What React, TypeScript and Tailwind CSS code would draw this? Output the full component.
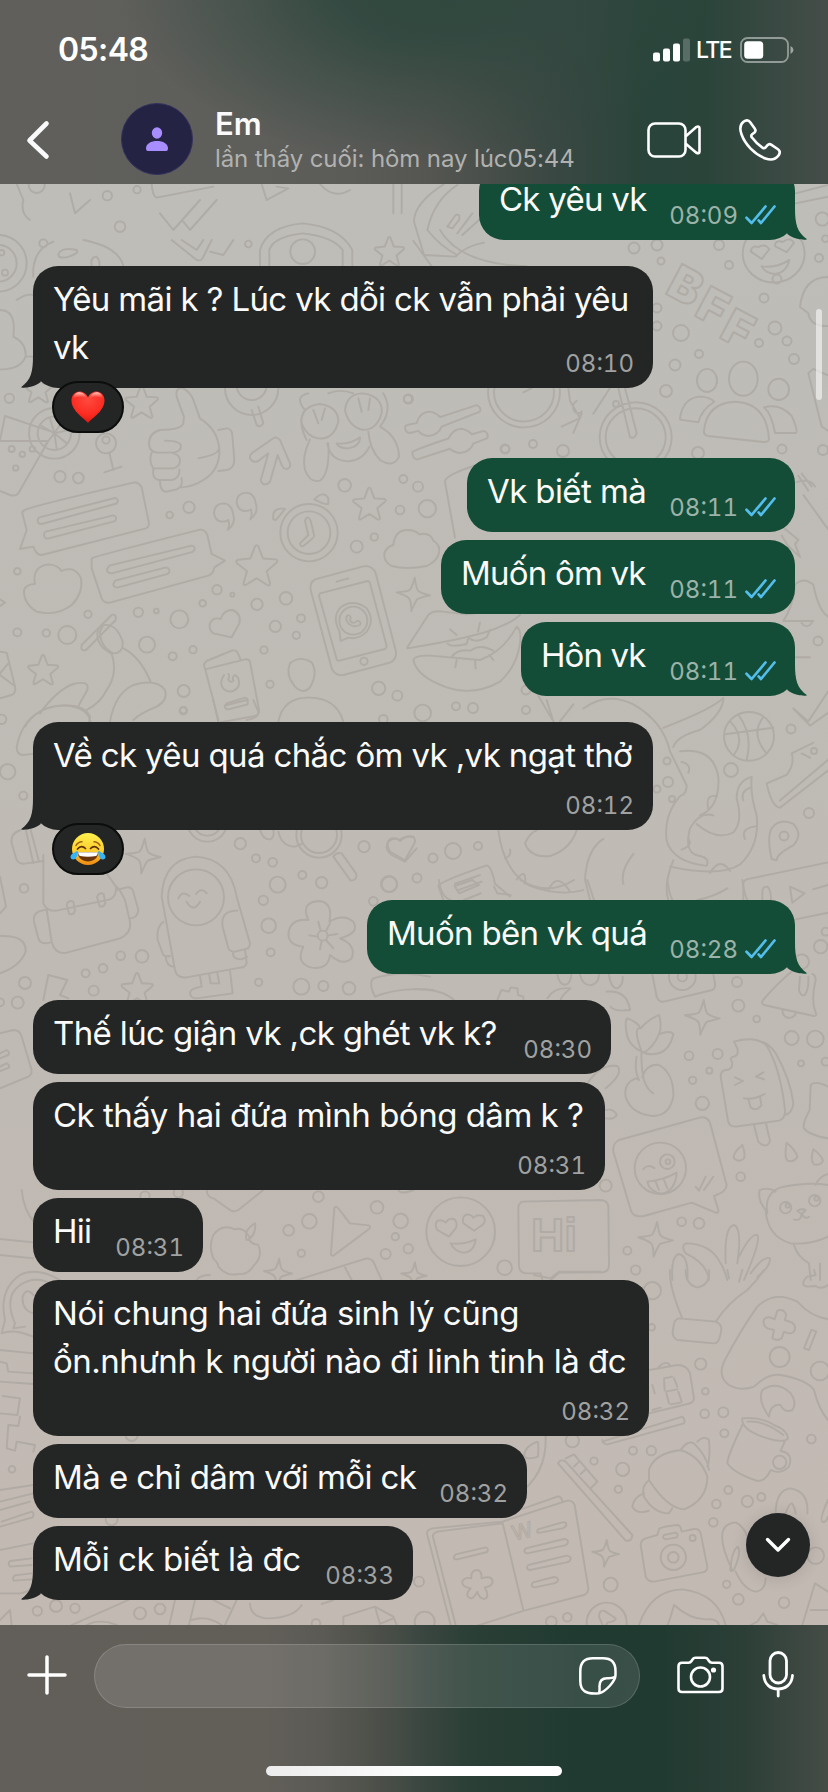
import React from 'react';

interface Message {
  id: number;
  lines: string[];
  time: string;
  outgoing?: boolean;
  tail?: boolean;
  reaction?: 'heart' | 'joy';
  box: string;
}

const MESSAGES: Message[] = [
  { id: 1, lines: ['Ck yêu vk'], time: '08:09', outgoing: true, tail: true, box: '-mt-[18px] h-[74px] w-[316px] tracking-[-0.75px]' },
  { id: 2, lines: ['Yêu mãi k ? Lúc vk dỗi ck vẫn phải yêu', 'vk'], time: '08:10', tail: true, reaction: 'heart', box: 'mt-[26px] h-[122px] w-[620px] tracking-[-0.64px]' },
  { id: 3, lines: ['Vk biết mà'], time: '08:11', outgoing: true, box: 'mt-[70px] h-[74px] w-[328px] tracking-[-0.6px]' },
  { id: 4, lines: ['Muốn ôm vk'], time: '08:11', outgoing: true, box: 'mt-2 h-[74px] w-[354px] tracking-[-0.8px]' },
  { id: 5, lines: ['Hôn vk'], time: '08:11', outgoing: true, tail: true, box: 'mt-2 h-[74px] w-[274px] tracking-[-0.9px]' },
  { id: 6, lines: ['Về ck yêu quá chắc ôm vk ,vk ngạt thở'], time: '08:12', tail: true, reaction: 'joy', box: 'mt-[26px] h-[108px] w-[620px] tracking-[-0.63px]' },
  { id: 7, lines: ['Muốn bên vk quá'], time: '08:28', outgoing: true, tail: true, box: 'mt-[70px] h-[74px] w-[428px] tracking-[-0.7px]' },
  { id: 8, lines: ['Thế lúc giận vk ,ck ghét vk k?'], time: '08:30', box: 'mt-[26px] h-[74px] w-[578px] tracking-[-0.63px]' },
  { id: 9, lines: ['Ck thấy hai đứa mình bóng dâm k ?'], time: '08:31', box: 'mt-2 h-[108px] w-[572px] tracking-[-0.5px]' },
  { id: 10, lines: ['Hii'], time: '08:31', box: 'mt-2 h-[74px] w-[170px] tracking-[-0.8px]' },
  { id: 11, lines: ['Nói chung hai đứa sinh lý cũng', 'ổn.nhưnh k người nào đi linh tinh là đc'], time: '08:32', box: 'mt-2 h-[156px] w-[616px] tracking-[-0.48px]' },
  { id: 12, lines: ['Mà e chỉ dâm với mỗi ck'], time: '08:32', box: 'mt-2 h-[74px] w-[494px] tracking-[-0.57px]' },
  { id: 13, lines: ['Mỗi ck biết là đc'], time: '08:33', tail: true, box: 'mt-2 h-[74px] w-[380px] tracking-[-0.46px]' },
];

type Triple = [number, number, number];

interface DoodleTile {
  x: number;
  y: number;
  sy?: number;
  paths: string[];
  dots: Triple[];
  stars?: Triple[];
  sparkles?: Triple[];
}

// Each tile is drawn at three times its size on the page
const TILES: DoodleTile[] = [
  {
    x: 0,
    y: 0,
    paths: [
      'M455 552Q458 590 470 593L640 560M785 552L800 600L865 565L830 560M50 552L70 600Q60 640 90 660M210 580L225 640L270 600M960 552Q1000 600 1050 570M1180 552V640M1205 552V640M480 640L520 690L600 600M550 665L570 690L650 600',
    ],
    dots: [[110, 555, 24], [322, 587, 14], [411, 569, 11], [360, 680, 16], [130, 730, 12]],
  },
  {
    x: 414,
    y: 0,
    paths: [
      'M90 552Q0 610 0 665L30 765L125 770Q150 740 210 728M130 555Q60 600 40 690Q80 740 130 765M100 680L125 645Q140 640 135 660L115 685ZM130 700L175 640M145 705L195 660',
      'M1145 580L1242 555M1145 610L1242 590',
    ],
    dots: [[1225, 657, 20], [1234, 716, 10]],
  },
  {
    x: 0,
    y: 240,
    paths: [
      'M100 110Q95 30 160 5M175 45Q180 20 230 30Q240 40 200 52Q175 55 175 45M275 78Q270 50 290 50Q300 60 298 78M250 0Q355 20 370 78',
      'M515 0L590 60Q605 65 610 50L635 0M545 0L590 30L610 0M630 35L670 45L700 0',
      'M780 78V30Q800 -40 908 -50Q1020 -40 1057 30V78M808 78V30Q820 -10 908 -20Q1000 -10 1028 30V78',
      'M0 210Q50 210 40 290Q80 310 77 350Q60 390 0 388M50 180Q80 160 100 165M80 350H100',
      'M755 510L770 555Q780 565 790 550L775 500',
    ],
    dots: [[-5, 70, 55], [-5, 70, 85], [5, 38, 8], [15, 98, 9], [908, 35, 37], [745, 12, 10], [28, 475, 14], [755, 445, 80], [755, 435, 45], [1225, 477, 14]],
    stars: [[1168, 35, 45], [115, 445, 45], [425, 487, 50]],
  },
  {
    x: 0,
    y: 430,
    paths: [
      'M0 33H145L55 190Q45 200 30 195L0 183M0 30L15 -42L145 2',
      'M163 10L120 -15M163 10L150 -35M163 10L190 -30M163 10L205 0M163 10L200 40M163 10L170 55M163 10L135 45M328 68L340 120M313 127L365 110',
      'M550 -20L552 -40Q540 -70 530 -100Q525 -130 550 -125Q570 -115 580 -90L600 -35Q655 0 658 60Q660 120 610 150Q580 170 545 172M550 -20Q545 0 480 0Q445 10 447 45Q450 65 470 68H520Q543 65 543 48Q540 32 495 32M455 68Q445 95 460 115H520Q540 110 540 92Q540 75 520 70M460 117Q455 145 475 150H515Q540 145 538 118M480 152Q480 185 500 185L530 178Q550 170 545 145M595 85Q650 75 655 60M655 0L680 -5Q695 -5 697 15L703 90Q703 115 680 120L655 123',
      'M820 25Q830 18 840 30L870 100Q873 115 860 117Q850 117 845 105L833 75L810 155Q800 168 787 160Q780 152 784 145L805 70L775 93Q758 100 750 85Q748 75 757 68Z',
      'M920 30Q890 -30 915 -60Q880 -100 925 -110M985 -110Q1020 -125 1060 -110M1150 -110Q1180 -60 1140 -10M905 -20Q900 -70 960 -78Q1015 -70 1015 -25Q1000 30 955 25Q920 20 905 -20M1035 -60Q1040 -110 1090 -110Q1150 -100 1145 -50Q1130 0 1090 0Q1045 -10 1035 -60M940 -60L955 -20M975 -65L965 -30M1075 -95L1085 -55M1110 -95L1105 -60M930 28Q905 80 915 120Q930 160 960 152Q990 130 985 40M1105 5Q1110 60 1140 90Q1180 115 1197 80Q1195 20 1140 -10M982 40Q990 92 1045 94Q1090 90 1108 50M1010 40Q1050 45 1080 22Q1080 50 1045 55Q1015 55 1010 40Z',
      'M75 240Q90 230 400 158Q415 155 425 172L447 280Q447 292 438 295L125 375Q110 377 100 350L60 357L80 300L67 250Q66 243 75 240ZM118 262L345 204Q355 205 353 216Q350 222 345 222L125 282Q112 282 113 270Q114 264 118 262ZM137 305L340 256Q350 258 348 268Q347 274 340 275L143 326Q132 325 132 315Q132 307 137 305Z',
      'M700 255Q695 220 670 220Q642 222 642 250Q645 272 665 275Q680 275 685 270Q690 285 683 300Q708 280 700 255ZM768 223Q763 188 738 188Q710 190 710 218Q713 240 733 243Q748 243 753 238Q758 253 751 268Q776 248 768 223Z',
      'M918 265Q925 258 932 272L943 318Q943 322 910 348Q900 350 900 340L925 315L915 272ZM943 208Q970 180 985 205V222Q975 225 943 208ZM820 268Q815 230 855 237L828 270Z',
      'M275 385Q280 380 600 299Q615 297 622 315L635 372L675 392L643 412Q640 432 625 437L330 518Q312 520 305 505L275 415ZM328 407L575 347Q587 350 583 360Q580 366 573 367L335 430Q320 430 321 418ZM345 452L498 412Q510 415 508 425Q507 431 498 433L352 473Q340 472 340 463Z',
      'M105 462Q95 410 145 403Q175 405 184 423Q225 405 243 445Q250 490 215 525Q170 560 110 545Q70 520 72 480Q80 462 105 462Z',
      'M1180 345Q1185 300 1222 300Q1245 300 1258 313Q1290 305 1300 332Q1322 345 1317 370Q1310 395 1280 408Q1220 420 1175 408Q1150 395 1153 370Q1160 350 1180 345Z',
      'M945 448L1090 409Q1118 405 1127 430L1188 665Q1190 690 1170 698L1030 735Q1005 738 995 715L932 480Q928 458 945 448ZM960 490L1103 453Q1108 453 1110 460L1160 648Q1160 655 1155 657L1018 692Q1012 693 1010 688L957 497ZM1010 455L1045 445M1045 623L1022 633L1018 603Q995 560 1022 532Q1060 505 1100 535Q1125 570 1100 605Q1075 630 1045 623M1040 560Q1045 550 1052 562L1050 572Q1060 585 1072 572Q1085 575 1080 585Q1060 595 1045 580Q1036 570 1040 560',
      'M695 622L640 610Q625 600 630 580Q640 560 662 567Q670 540 697 540Q725 550 718 580Z',
      'M1222 652L1285 555Q1300 540 1330 545L1400 553Q1470 545 1560 530M1222 655Q1440 620 1500 590Q1540 575 1560 555M1550 590Q1510 665 1440 690L1290 677Q1245 675 1240 690Q1250 740 1340 772Q1420 800 1500 755Q1550 710 1560 640Q1565 600 1550 590M1340 635Q1345 655 1400 642L1405 625M1408 625Q1425 640 1460 622L1470 600M1355 682Q1370 655 1412 662Q1440 640 1480 662M1370 690L1366 712M1425 690L1427 715M1468 675L1480 690M1350 598L1370 615M1440 578L1434 605',
      'M615 715L655 870M615 718L735 688Q747 687 750 695L777 840Q778 855 765 858L660 877M613 712Q610 700 620 693L695 662Q710 658 715 672L722 690M672 735Q655 760 672 778Q695 795 715 770Q722 745 705 735Q695 740 700 752Q690 760 685 748Q690 735 685 732M680 820L735 803Q745 805 743 815V823L685 838Q675 838 674 828Z',
      'M835 875Q850 800 930 803Q1010 805 1030 875M870 700Q900 675 935 697Q955 730 930 772Q910 795 885 770Q855 735 870 700',
      'M245 645L335 555Q350 550 347 570L258 660Q240 665 245 645ZM310 585Q350 580 368 635Q370 670 340 670Q300 650 300 605ZM300 590Q280 620 310 655L335 672Q355 730 320 780Q300 820 260 840M370 655Q420 680 452 755M330 875Q345 790 400 765Q470 745 495 780Q505 810 470 830Q420 850 400 870M120 850Q170 780 220 762Q270 750 262 780L235 828M75 890Q110 830 190 826Q270 830 273 885',
      'M0 665L20 668L45 770Q48 790 35 795L0 805M0 730L25 700M0 735L40 765M0 508L15 518L0 528',
    ],
    dots: [
      [163, 10, 76], [163, 10, 50], [35, 57, 9], [67, 73, 8], [97, 57, 8], [47, 114, 8], [318, 40, 30], [318, 30, 11], [927, 308, 86], [927, 308, 64], [1092, 694, 11], [1060, 572, 42],
      [180, 140, 17], [235, 144, 16], [509, 255, 10], [567, 232, 17], [1034, 166, 19], [1210, 147, 12], [1254, 170, 15], [1200, 240, 13], [1282, 236, 26], [1070, 350, 18], [1123, 321, 11], [52, 424, 10],
      [651, 479, 14], [697, 494, 6], [608, 520, 10], [771, 523, 17], [858, 505, 19], [903, 565, 12], [889, 616, 11], [826, 589, 17], [792, 660, 11], [538, 568, 27], [415, 547, 14], [469, 543, 7],
      [264, 553, 11], [52, 607, 12], [139, 609, 11], [202, 615, 27], [441, 644, 24], [518, 679, 12], [579, 659, 11], [551, 783, 18], [550, 841, 10], [810, 763, 11], [1136, 775, 20], [1192, 797, 15],
      [1268, 849, 25], [1368, 829, 12], [1419, 834, 15], [1516, 57, 12], [1150, 868, 13], [5, 868, 14],
    ],
    stars: [[1108, 222, 50], [770, 407, 63], [129, 720, 46]],
    sparkles: [[1240, 493, 50]],
  },
  {
    x: 0,
    y: 700,
    paths: [
      'M62 390Q30 400 35 430L50 480Q60 495 80 490L130 483M78 392L100 490M92 390L117 485',
      'M130 465V610Q140 635 170 632L330 598Q350 590 348 560L320 520M140 630L155 725Q165 765 200 758L360 715Q395 700 390 665L375 600Q360 570 350 560M140 628L115 635Q98 645 102 665L115 715Q120 735 150 728M350 570L380 562Q395 560 400 575L415 630Q412 655 390 655M200 615Q205 598 220 605L225 632Q222 645 208 642ZM291 592Q296 575 311 582L316 609Q313 622 299 619Z',
      'M485 590Q490 480 585 470Q690 475 710 590L750 730Q750 745 735 748L740 790Q735 803 720 803L560 832Q530 835 525 810ZM535 595Q545 570 568 588M588 582Q605 560 620 580M560 605Q580 640 600 605M712 632Q660 632 668 680L685 745Q690 755 705 755L745 745M700 757Q695 778 725 778L742 770M490 665Q468 680 473 720L490 765Q495 770 510 768M497 770Q500 800 520 800M600 828L605 860Q570 865 570 880Q572 895 590 895L698 880L690 812M628 825L632 850H658L652 820',
      'M925 660Q900 605 960 603Q1000 610 988 665Q1030 640 1060 665Q1080 700 1020 715Q1070 735 1055 775Q1030 800 990 765Q985 810 935 803Q885 790 910 740Q860 735 866 695Q875 655 925 660M962 692L955 665M978 693L990 670M985 706L1012 702M978 720L1000 745M965 722L960 748M953 710L928 706',
      'M1215 485L1175 465Q1155 450 1162 430Q1175 410 1200 420Q1215 405 1242 412M1215 485L1250 445',
      'M1000 470Q1010 455 1025 460L1068 520Q1075 540 1052 542ZM780 390Q790 420 810 418Q825 412 820 390M835 395Q845 440 885 440L905 432',
      'M145 825L202 840L180 885L205 895M145 825L130 900M0 708Q80 705 77 755Q60 800 0 820',
      'M0 1000L40 990Q60 990 65 1010L95 1110Q95 1125 85 1130L0 1165M0 1060L20 1050Q30 1055 25 1065L0 1075M0 1100L20 1090Q30 1095 27 1103L0 1113M0 530L18 620L0 640',
      'M1125 890Q1105 850 1120 835Q1200 810 1290 830M1125 890Q1200 860 1300 870',
      'M50 140Q70 40 160 20Q250 5 270 50L265 75M50 140Q50 165 70 165L110 160M640 0L655 66M760 0L775 35Q775 55 740 60M680 15L740 0',
    ],
    dots: [
      [588, 592, 84], [968, 707, 15], [957, 405, 68], [957, 405, 54], [622, 365, 60], [622, 365, 42],
      [23, 215, 23], [70, 287, 12], [550, 32, 11], [721, 431, 17], [768, 475, 12], [818, 487, 13], [907, 525, 12], [965, 548, 17], [833, 554, 24], [790, 601, 14], [806, 677, 22], [812, 757, 12],
      [776, 847, 11], [1092, 440, 17], [1168, 553, 23], [1120, 604, 13], [904, 860, 24], [970, 858, 15], [1047, 865, 19], [362, 767, 13], [426, 769, 19], [309, 805, 13], [257, 820, 12], [281, 872, 15],
      [75, 849, 18], [53, 908, 18], [0, 907, 12], [72, 565, 13],
    ],
    stars: [[411, 866, 48]],
    sparkles: [[430, 468, 52]],
  },
  {
    x: 414,
    y: 880,
    paths: [
      'M985 0Q990 40 1000 60M1045 65V35Q1045 20 1060 20Q1070 25 1072 65M1128 20L1172 40L1135 68ZM1145 118L1242 98M1197 28L1242 15',
      'M75 0Q80 50 110 60M122 18L175 0L195 15L135 40ZM150 60L200 40M240 20L250 40L290 45M320 0Q400 50 480 0M520 0L540 60M760 0Q765 40 775 60M850 60Q900 50 940 25',
      'M640 470Q630 420 640 415Q670 425 680 445Q700 420 735 405Q745 440 735 462Q770 450 778 462Q765 520 720 522Q700 525 683 515Q650 500 640 470M683 515Q655 440 680 445M735 462Q720 500 690 518M683 515Q680 560 690 600Q700 630 718 640M668 530Q660 570 675 600M685 590Q700 550 735 555Q780 580 778 650Q765 710 715 708Q650 700 635 650Q628 610 665 595L675 600',
      'M400 355Q420 320 470 325Q440 350 440 360M430 283Q435 315 455 314Q470 310 472 283M498 283Q505 315 530 316Q555 310 555 283M585 283Q590 325 610 325Q628 315 626 290M578 335Q640 330 648 390Q600 395 590 380M250 360L262 330L285 335L290 322L310 325L312 345L328 350V360M0 328Q80 325 120 360',
      'M715 283L728 350Q735 368 750 365L895 330Q905 325 903 310L898 283',
      'M1145 265Q1100 300 1047 360Q1040 370 1050 375L1200 408Q1210 408 1205 398Q1190 360 1205 300Q1205 285 1195 282M1105 388Q1105 412 1125 414Q1145 412 1145 395M1158 290L1155 330Q1160 350 1172 345Q1185 330 1183 290',
      'M960 485Q1030 465 1060 500Q1100 570 1113 690Q1115 715 1095 722L965 740Q945 740 942 722L920 590Q920 572 935 570Q955 570 955 550Q945 530 960 530Q975 525 970 505ZM1010 478Q1060 480 1085 520Q1130 600 1138 670Q1135 700 1112 705M1020 735L1033 785Q1045 800 1060 795Q1070 788 1067 778L1055 727M963 592L987 603L963 615M1048 577L1026 590L1050 598M990 655Q1020 660 1052 642M1003 658L1010 683Q1030 695 1042 675L1038 650',
      'M985 795Q955 820 960 835Q975 850 990 835Q995 820 985 795M1118 788Q1110 830 1120 842Q1140 848 1150 830Q1145 810 1118 788M1198 808Q1188 840 1200 853Q1220 858 1227 842Q1222 825 1198 808',
      'M615 780L860 712Q880 710 888 728L938 915Q938 935 900 948L913 990Q915 1000 905 998L833 968L690 1008Q660 1013 652 995L598 815Q595 790 615 780ZM688 868Q700 850 722 865M700 905Q750 900 788 878Q785 930 745 942Q705 935 700 905M725 905L735 930M750 900L760 925M845 920L855 932L875 890M870 930L898 890',
      'M110 1090Q150 1095 185 1078Q180 1118 145 1118Q120 1112 110 1090M105 1070L70 1050Q60 1035 70 1022Q85 1018 95 1028Q105 1012 122 1018Q132 1030 125 1045ZM180 1052L148 1030Q142 1010 158 1003Q172 1003 178 1013Q190 1002 208 1008Q218 1025 205 1035Z',
      'M325 965L560 960Q582 962 583 980L585 1155Q585 1175 565 1177L435 1178L410 1200M325 965Q312 970 313 990L315 1160Q318 1178 335 1180H380L385 1200',
      'M1060 1000Q1050 940 1100 922Q1180 905 1242 915M1055 990Q1030 960 1037 930Q1065 920 1085 935M1055 990Q1060 1070 1130 1090Q1190 1095 1242 1070M1205 915Q1215 890 1242 882M1150 992Q1165 985 1175 990L1163 1003ZM1163 1003Q1160 1025 1140 1018M1163 1003Q1175 1020 1185 1010M1140 1095Q1150 1130 1185 1150L1190 1200M1218 1150V1200',
      'M775 1200Q770 1130 795 1122Q825 1130 820 1200M885 1200Q880 1150 815 1120Q800 1100 815 1090Q890 1090 920 1150Q930 1165 940 1200M935 1150Q930 1040 960 1035Q985 1045 970 1150M975 1130Q1010 1060 1030 1065Q1042 1080 990 1200M1010 1180Q1050 1125 1068 1135Q1070 1160 1030 1190',
      'M1242 620Q1205 600 1190 615L1187 690Q1165 730 1170 745Q1185 765 1242 775M520 610Q560 550 610 558Q630 580 575 625M575 690Q600 685 608 705Q600 720 575 715',
    ],
    dots: [
      [805, 290, 40], [805, 290, 14], [739, 865, 77], [760, 845, 22], [762, 845, 7], [140, 1055, 103], [1115, 983, 17], [1202, 962, 17], [1121, 977, 6], [1207, 956, 6], [1163, 245, 22],
      [969, 306, 15], [973, 377, 18], [1028, 417, 10], [1133, 474, 21], [1204, 477, 25], [1161, 550, 9], [1235, 545, 12], [1235, 155, 12], [1220, 200, 20], [825, 527, 13], [911, 522, 15], [886, 572, 9],
      [836, 601, 11], [865, 670, 20], [980, 890, 13], [575, 917, 18], [803, 1025, 13], [855, 1030, 16], [640, 1112, 12], [665, 1170, 14], [272, 1163, 22],
    ],
    sparkles: [[865, 412, 52], [725, 1078, 52]],
  },
  {
    x: 0,
    y: 1180,
    paths: [
      'M705 148Q665 130 640 165Q625 200 640 235Q655 250 655 260Q680 290 715 282Q745 285 760 258Q790 230 775 195Q745 190 748 170Q730 140 705 148M740 180Q730 150 765 130Q770 160 745 180',
      'M1003 84Q1008 76 1014 84L1050 130L1106 136Q1114 140 1108 146L1002 226Q992 230 993 220Z',
      'M620 30Q620 50 640 55L690 90Q700 98 715 90L790 30M860 310L1100 235Q1112 235 1120 245L1145 300M1035 262L1055 300M1195 30Q1200 45 1242 30M590 300Q600 285 630 285',
      'M65 30Q70 90 105 130M0 177L100 187M0 225L100 235M5 460L15 420Q-5 330 60 285Q110 260 180 300M45 430Q10 350 60 315Q100 290 140 305M5 460Q40 445 100 470M45 430L40 445L75 440M100 400Q65 390 68 350Q80 320 100 345M0 510L100 520M0 545L20 550L25 575L100 580M0 605L100 612M8 648L60 655L52 705L0 700M60 710L55 738L25 735L20 805L45 812L50 785L105 795L100 815',
      'M0 930L100 915M0 965L100 940M0 990L90 965M5 1025L95 995Q105 1000 98 1012L0 1040M0 1110L100 1090M95 1135L30 1143Q22 1150 30 1160L95 1155M95 1180L45 1186Q35 1194 42 1202L95 1198M0 1240L60 1240Q100 1235 100 1200',
      'M215 1335L385 1260M525 1260L508 1335M585 1260L567 1335M710 1260L675 1335M640 1260L690 1285M575 1320Q620 1305 665 1335M750 1270Q750 1310 800 1315Q880 1315 905 1275M965 1272L1000 1260M1030 1335V1310L1125 1280L1180 1310L1190 1335M1125 1280L1140 1332L1180 1315M0 1320L30 1290L35 1335M260 1335Q300 1315 350 1335',
    ],
    dots: [
      [36, 868, 10], [955, 50, 16], [1131, 82, 19], [928, 124, 22], [866, 151, 16], [904, 220, 11], [1157, 222, 15], [1202, 123, 22], [1186, 170, 11], [1225, 206, 14], [435, 48, 14], [535, 38, 14],
      [112, 1293, 14], [168, 1278, 18], [225, 1285, 14], [420, 1300, 18], [480, 1287, 16], [948, 1330, 13], [335, 1018, 18], [395, 765, 18],
    ],
    sparkles: [[834, 278, 42], [1242, 285, 38]],
  },
  {
    x: 414,
    y: 1270,
    paths: [
      'M768 0Q765 50 805 145M905 155Q940 100 1000 60Q1030 30 1050 0M795 145L905 155Q920 160 922 175Q918 220 900 220L790 210Q772 200 777 180Q780 145 795 145M815 0Q815 45 850 52Q890 45 885 0M940 0L945 25M985 0L975 35',
      'M1200 0L1205 15L1180 20Q1155 45 1180 50L1205 48Q1220 60 1242 45',
      'M930 275Q980 180 1030 110Q1080 60 1150 95Q1190 140 1242 148M930 275Q910 320 945 345Q980 365 1020 350Q1060 310 1100 315Q1180 330 1200 360Q1215 420 1242 450M1090 122Q1110 115 1117 135L1112 150L1135 158Q1148 168 1140 185Q1130 195 1110 185L1103 205Q1090 215 1075 205L1080 180L1060 175Q1045 165 1050 148Q1060 135 1082 148ZM1192 180L1207 184L1185 240L1170 235Z',
      'M705 300L790 285Q820 285 828 310L840 385Q838 400 820 402L705 430M735 290Q755 270 768 285M565 515L805 440Q815 450 810 460L580 523Q568 523 565 510M750 325L775 320M750 330L752 360M780 325L790 350M755 365L790 358M757 370L765 400M793 365L803 395M770 403L800 398M715 345L722 370M715 420L740 413',
      'M985 445Q1040 440 1080 465Q1120 480 1122 505Q1110 520 1060 505Q980 480 985 445M1000 455Q1050 450 1108 495M985 465Q940 560 940 580Q960 610 1030 633Q1055 635 1070 600Q1100 615 1125 590Q1140 550 1100 543L1112 515M1065 440Q1030 390 1045 360Q1090 330 1130 370Q1150 400 1135 420Q1110 430 1100 405Q1070 400 1065 440',
      'M705 600Q720 550 800 540Q860 560 880 620Q880 690 810 718Q760 715 705 630ZM800 540Q820 510 840 520Q880 560 885 600M850 515Q870 495 885 510Q890 560 880 590M705 630Q680 650 690 680Q720 730 765 730L775 715M690 670Q660 680 655 710Q670 735 705 722',
      'M432 580Q440 565 455 575L655 795Q655 815 635 812ZM455 565L480 553L550 635L530 655M480 590L495 575M500 612L515 598',
      'M265 755L55 775Q35 780 40 795L110 1065M265 760L70 785Q52 792 58 805L125 1065M265 755L328 1020M265 755L460 692Q475 690 482 705L523 955Q523 970 510 975L330 1022L180 1070M310 722L430 680Q440 678 445 692',
      'M372 778L445 757Q458 755 457 765Q455 772 445 775L378 788Q365 790 372 778ZM335 835L450 807Q463 808 462 817Q460 825 450 827L340 850Q325 848 335 835ZM343 885L458 857Q471 858 470 867Q468 875 458 877L348 900Q333 898 343 885ZM357 937L420 921Q433 922 432 931Q430 938 420 940L362 952Q347 950 357 937ZM125 853L215 832Q225 835 220 846L130 868Q112 868 125 853ZM172 925Q170 900 190 900Q205 903 202 925Q235 915 236 935Q235 950 212 952Q228 980 212 987Q195 985 190 965Q175 995 162 980Q155 970 170 955Q140 950 146 932Q155 920 172 925Z',
      'M695 805L730 795L735 778Q740 770 790 765Q800 765 803 785L840 777Q855 775 860 790L880 890Q880 905 865 907L720 935Q700 935 695 920L680 825Q680 810 695 805ZM750 795L785 788Q795 792 788 802L755 808Q742 805 750 795Z',
      'M1085 730Q1085 660 1130 655Q1185 665 1180 730M1115 730Q1125 700 1133 700Q1140 705 1145 730M925 790Q930 760 965 757Q990 770 1000 800M925 790Q920 830 955 900M950 900Q950 850 970 830Q985 840 960 900Q945 910 950 890M965 905Q990 960 1025 965Q1055 960 1055 925M1242 690Q1215 750 1225 755Q1235 760 1242 740',
      'M555 1040Q555 1020 570 1022L605 1045Q605 1055 580 1058Q575 1070 570 1075ZM675 1065Q710 960 805 958Q910 970 935 1065M780 1005Q765 1060 760 1065M780 1005Q830 1050 880 1048Q910 1045 915 1065M1010 1065L1030 1055L1048 1030L1060 1055L1090 1065M1165 1065L1203 940L1242 965M1190 1020H1242',
      'M395 497Q400 620 300 680M370 515Q375 515 372 560Q345 570 330 560Q330 530 370 515M360 15L410 25L435 5L560 5',
    ],
    dots: [
      [1097, 261, 30], [1218, 303, 28], [1097, 577, 20], [778, 862, 38], [778, 862, 16], [836, 804, 9], [578, 1058, 60],
      [715, 62, 26], [713, 172, 10], [860, 282, 17], [874, 364, 10], [872, 431, 13], [928, 427, 15], [931, 490, 12], [1192, 507, 13], [475, 512, 20], [657, 542, 12], [712, 542, 14], [540, 573, 11],
      [626, 598, 20], [613, 658, 11], [943, 660, 12], [907, 702, 13], [1000, 694, 17], [1042, 681, 12], [898, 757, 13], [15, 935, 15], [590, 944, 21], [938, 943, 11], [973, 988, 16], [1110, 998, 16],
      [32, 1055, 30], [412, 1055, 16], [460, 1042, 13], [1205, 857, 25],
    ],
    sparkles: [[575, 850, 40]],
  },
  {
    x: 380,
    y: 230,
    sy: 0.4273,
    paths: [
      'M951 352A30 27 0 1 0 1011 352A30 27 0 1 0 951 352M1047 348A43 40 0 1 0 1133 348A43 40 0 1 0 1047 348M1165 373A31 25 0 1 0 1227 373A31 25 0 1 0 1165 373',
      'M972 470Q980 405 1065 402Q1160 405 1167 490Q1165 497 1150 496L985 482Q970 480 972 470M900 440Q910 390 965 390Q990 392 1003 402Q965 420 955 450L910 445Q898 445 900 440M1152 415Q1200 405 1235 435Q1255 470 1248 475L1185 475Q1175 430 1152 415',
      'M1088 55A93 68 0 1 0 1274 55A93 68 0 1 0 1088 55M1145 85Q1190 90 1228 70Q1220 100 1185 103Q1155 100 1145 85M1145 68L1112 50Q1115 35 1135 40Q1155 30 1168 45ZM1220 52L1185 38Q1185 22 1208 28Q1230 15 1242 30Z',
      'M324 380A108 82 0 1 0 540 380A108 82 0 1 0 324 380M342 380A90 68 0 1 0 522 380A90 68 0 1 0 342 380M659 485A108 82 0 1 0 875 485A108 82 0 1 0 659 485M677 485A90 68 0 1 0 857 485A90 68 0 1 0 677 485M735 370L770 475Q765 490 750 485L715 370M565 370L570 400L600 440L545 460M640 430L690 370M590 400A15 15 0 1 0 605 425M605 430L580 475M430 380L455 370',
      'M75 460Q80 455 110 452Q120 425 150 425Q170 428 180 438L290 410Q305 415 300 425L185 460Q175 480 145 482Q125 480 115 470L90 475Q75 475 75 460ZM97 520Q102 515 205 488Q220 465 245 465Q265 468 275 478L312 470Q327 475 322 487L280 500Q270 520 240 522Q220 520 210 512L112 537Q97 535 97 520Z',
      'M195 590Q190 575 290 550M195 590L225 720M1032 1185A75 57 0 1 0 1182 1185A75 57 0 1 0 1032 1185M1035 1180L1180 1165M1075 1135Q1120 1180 1100 1240M1050 1150Q1100 1190 1060 1230M1150 1140Q1110 1180 1160 1225',
      'M610 1120Q680 1080 760 1110Q850 1150 870 1220L920 1300Q920 1320 900 1325Q850 1370 860 1430Q880 1480 980 1488Q990 1470 960 1465Q910 1460 930 1400Q960 1360 1000 1370M850 1165Q1000 1120 1030 1095Q1030 1130 960 1170Q890 1185 880 1210M900 1220Q1000 1210 1015 1280Q1020 1350 960 1370M950 1390Q1010 1430 1060 1410Q1090 1385 1070 1330Q1070 1290 1115 1280Q1110 1320 1130 1370Q1140 1440 1080 1485Q1020 1515 870 1490',
      'M905 1245Q935 1250 925 1270M985 1355Q975 1320 1010 1325M1090 1335Q1080 1315 1110 1305M990 1505Q1020 1465 1050 1500M1095 1425Q1080 1400 1130 1395M905 1450Q940 1440 925 1425M475 1090L520 1150L500 1100M540 1150L580 1110',
      'M355 1405Q370 1500 450 1535Q540 1560 610 1545M375 1470Q395 1465 390 1450M410 1520Q440 1490 435 1530M505 1545Q530 1500 570 1548M435 1435Q450 1410 470 1405M435 1435Q450 1470 510 1465Q570 1450 590 1405M670 1425Q620 1450 615 1520L630 1568M760 1460Q720 1500 730 1530M880 1475Q850 1530 865 1568',
      'M1175 1472Q1160 1420 1175 1400Q1200 1375 1240 1390Q1270 1415 1240 1440Q1190 1460 1190 1475Z',
      'M1160 1295L1220 1275Q1245 1250 1235 1225L1300 1200M1160 1295Q1175 1350 1200 1352L1344 1265M1200 1335L1344 1240M1265 1225L1290 1235M1240 1120L1285 1150L1344 1080M1344 1130L1290 1160L1240 1120',
      'M1210 915Q1240 880 1245 830Q1270 810 1300 830Q1315 890 1344 905M1210 915L1300 915M1265 920Q1280 935 1295 920M1205 715L1225 740L1260 765L1245 735L1255 725L1215 700M1240 1000L1290 1000M1250 590Q1290 580 1305 600M1255 575L1285 610M1265 570L1295 600M1270 620L1344 700',
      'M1090 1568V1530Q1090 1520 1110 1518L1344 1480M75 1475L30 1455Q15 1435 30 1425Q50 1420 60 1430Q80 1415 100 1420Q110 1430 100 1440ZM190 1568L175 1535Q180 1525 320 1487Q335 1490 345 1530L390 1560M225 1530L300 1510M235 1545L305 1525',
      'M1260 180Q1270 110 1344 110M1344 225Q1290 225 1285 195L1260 180M1285 335L1300 325L1344 340M1285 335L1325 460L1344 470M100 25L155 85M180 0Q240 80 440 85',
    ],
    dots: [],
  },
];

const LOOSE_DOTS: Triple[] = [
  [634, 248, 5.5], [657, 245, 5.5], [661, 261, 3.5], [719, 245, 5], [729, 265, 4], [819, 258, 4], [657, 308, 4.5], [657, 326, 4.5], [681, 333, 8], [675, 365, 5.5], [666, 391, 6],
  [699, 354, 4], [764, 298, 4.5], [777, 279, 4.5], [775, 328, 6.5], [787, 341, 4.5], [794, 359, 5], [759, 343, 4], [782, 449, 4.5], [823, 450, 5], [698, 453, 6], [563, 451, 6], [533, 444, 4],
  [505, 449, 4.5], [408, 399, 4], [818, 641, 4.5], [526, 710, 4], [526, 690, 4.5], [731, 770, 7], [809, 813, 5], [791, 729, 4.5], [668, 782, 5], [672, 799, 3], [667, 761, 3.5], [657, 789, 3.5],
  [453, 851, 8], [478, 846, 4], [433, 858, 4.5], [417, 878, 4.5], [389, 884, 8], [784, 836, 4.5], [814, 751, 3], [616, 404, 3],
];

const STAR = 'M-4 -46Q0 -52 4 -46L15 -17L46 -15Q52 -12 47 -7L24 13L32 43Q31 49 25 46L0 30L-26 46Q-32 48 -31 41L-23 13L-47 -6Q-51 -12 -45 -14L-15 -17Z';
const SPARKLE = 'M4 -50Q10 -14 15 -10Q25 -2 50 3Q20 10 12 14Q6 22 -6 50Q-6 20 -13 12Q-20 4 -50 -6Q-18 -8 -11 -13Q-4 -20 4 -50Z';

function Wallpaper() {
  return (
    <svg
      className="absolute inset-0 h-full w-full [&_*]:[vector-effect:non-scaling-stroke]"
      viewBox="0 184 828 1441"
      fill="none"
      stroke="#a9a49e"
      strokeWidth="1.9"
      strokeLinejoin="round"
      strokeLinecap="round"
      opacity="0.68"
    >
      {TILES.map((tile, i) => (
        <g key={i} transform={`translate(${tile.x} ${tile.y}) scale(0.33333 ${tile.sy ?? 0.33333})`}>
          {tile.paths.map((d, j) => <path key={j} d={d} />)}
          {tile.dots.map(([cx, cy, r], j) => <circle key={j} cx={cx} cy={cy} r={r} />)}
          {tile.stars?.map(([x, y, r], j) => (
            <path key={j} d={STAR} transform={`translate(${x} ${y}) scale(${r / 50})`} />
          ))}
          {tile.sparkles?.map(([x, y, r], j) => (
            <path key={j} d={SPARKLE} transform={`translate(${x} ${y}) scale(${r / 50})`} />
          ))}
        </g>
      ))}
      {LOOSE_DOTS.map(([cx, cy, r], i) => <circle key={i} cx={cx} cy={cy} r={r} />)}
      <g className="font-['Inter',sans-serif] font-black" fontSize="47">
        <text x="664" y="293" transform="rotate(28 664 293)">B</text>
        <text x="693" y="315" transform="rotate(28 693 315)">F</text>
        <text x="718" y="337" transform="rotate(28 718 337)">F</text>
      </g>
      <text x="531" y="1251" fontSize="46" className="font-['Liberation_Sans',sans-serif] font-bold">Hi</text>
      <text x="514" y="1541" fontSize="21" transform="rotate(-14 514 1541)" className="font-['Inter',sans-serif]" strokeWidth="1">W</text>
    </svg>
  );
}

function ReadTicks() {
  return (
    <svg className="mb-[3px] ml-[7px] h-5 w-[31px]" viewBox="0 0 31 20" fill="none" stroke="#53bdeb" strokeWidth="2.7" strokeLinecap="round" strokeLinejoin="round">
      <path d="M1.5 12.8L6.6 18L20.5 1.5M13.6 15.4L16 18L29.5 1.5" />
    </svg>
  );
}

function HeartEmoji() {
  return (
    <svg className="h-[34px] w-9" viewBox="0 0 36 34">
      <defs>
        <radialGradient id="heartFill" cx="0.5" cy="0.25" r="0.8">
          <stop offset="0" stopColor="#ff4a3f" />
          <stop offset="0.6" stopColor="#fb2c22" />
          <stop offset="1" stopColor="#d9140f" />
        </radialGradient>
        <linearGradient id="heartShine" x1="0" y1="0" x2="0" y2="1">
          <stop offset="0" stopColor="#ffd9d2" stopOpacity="0.95" />
          <stop offset="1" stopColor="#ff6a5c" stopOpacity="0" />
        </linearGradient>
      </defs>
      <path d="M18 33C14 28 1.500 21 1.500 10.500C1.500 5 5 1.500 9.500 1.500C13.500 1.500 16.500 4 18 7.500C19.500 4 22.500 1.500 26.500 1.500C31 1.500 34.500 5 34.500 10.500C34.500 21 22 28 18 33Z" fill="url(#heartFill)" />
      <path d="M3 9C3.500 5 6 2.300 9.500 2.300C13 2.300 15 4.500 16.500 8C12 6 7 6 3 9ZM19.500 8C21 4.500 23 2.300 26.500 2.300C30 2.300 32.500 5 33 9C29 6 24 6 19.500 8Z" fill="url(#heartShine)" />
    </svg>
  );
}

function JoyEmoji() {
  return (
    <svg className="h-[34px] w-9" viewBox="0 0 36 34">
      <defs>
        <linearGradient id="joyFace" x1="0" y1="0" x2="0" y2="1">
          <stop offset="0" stopColor="#fff04d" />
          <stop offset="0.55" stopColor="#fdcf2f" />
          <stop offset="1" stopColor="#ee8a12" />
        </linearGradient>
      </defs>
      <circle cx="18" cy="17" r="16" fill="url(#joyFace)" />
      <path d="M6 13.500Q8 10 12 9.800M30 13.500Q28 10 24 9.800" stroke="#a5611a" strokeWidth="1.500" fill="none" strokeLinecap="round" />
      <path d="M7.500 17Q11.500 12.500 15.500 16.500M20.500 16.500Q24.500 12.500 28.500 17" stroke="#5e2f0a" strokeWidth="1.700" fill="none" strokeLinecap="round" />
      <path d="M7.500 20H28.500C28 26 23.500 29.500 18 29.500S8 26 7.500 20Z" fill="#6b350c" />
      <path d="M8 20.200H28Q27.500 23.500 26 24Q18 25.500 10 24Q8.500 23.500 8 20.200Z" fill="#fff" />
      <path d="M7.500 18.500C8 22 7 27.500 3.200 27.500C1.500 27.500 0.400 26.300 0.500 24.800C0.800 21.500 5 21 7.500 18.500ZM28.500 18.500C28 22 29 27.500 32.800 27.500C34.500 27.500 35.600 26.300 35.500 24.800C35.200 21.500 31 21 28.500 18.500Z" fill="#37b4f5" />
    </svg>
  );
}

function MessageBubble({ message }: { message: Message }) {
  const { lines, time, outgoing, tail, reaction, box } = message;

  return (
    <div
      className={`relative grid shrink-0 grid-cols-[minmax(0,1fr)] rounded-[25px] pl-5 pr-[19px] ${box} ${
        outgoing ? 'self-end bg-[#144d37]' : 'self-start bg-[#242626]'
      }`}
    >
      <div className="whitespace-nowrap pt-[9px] text-[33px] leading-[48px] text-[#fafafa] [grid-area:1/1]">
        {lines.map((line) => <div key={line}>{line}</div>)}
      </div>
      <div className={`flex items-end self-end justify-self-end pb-[12px] text-[24px] leading-6 tracking-normal tabular-nums [grid-area:1/1] ${
        outgoing ? 'text-[#9bb3a9]' : 'text-[#a0a1a1]'
      }`}>
        <span>{time}</span>
        {outgoing && <ReadTicks />}
      </div>
      {tail && (
        <svg
          className={`absolute bottom-0 h-8 w-8 ${outgoing ? '-right-3 text-[#144d37]' : '-left-3 -scale-x-100 text-[#242626]'}`}
          viewBox="0 0 32 32"
          fill="currentColor"
        >
          <path d="M20 0C20 16 22 24 32 31.200C32 32 20 32.500 12.300 26L10 0Z" />
        </svg>
      )}
      {reaction && (
        <div className="absolute -bottom-[45px] left-[19px] z-10 flex h-[52px] w-[72px] items-center justify-center rounded-full border-2 border-[#0b0c0c] bg-[#242626]">
          {reaction === 'heart' ? <HeartEmoji /> : <JoyEmoji />}
        </div>
      )}
    </div>
  );
}

function StatusBar() {
  return (
    <div className="flex h-[96px] items-start justify-between pl-[58px] pr-[34px] pt-[30px] text-white">
      <span className="text-[32px] font-semibold leading-10 tracking-[-0.6px]">05:48</span>
      <div className="flex items-center pt-[7px]">
        <svg className="h-6 w-[38px]" viewBox="0 0 38 24" fill="#fff">
          <rect x="0" y="14.500" width="7" height="9" rx="2" />
          <rect x="10" y="10.500" width="7" height="13" rx="2" />
          <rect x="20" y="5.500" width="7" height="18" rx="2" />
          <rect x="30" y="0.500" width="7" height="23" rx="2" opacity="0.22" />
        </svg>
        <span className="ml-[5px] w-[36px] text-[23px] font-medium leading-6 tracking-[-1.5px]">LTE</span>
        <svg className="ml-2 h-[26px] w-[54px]" viewBox="0 0 54 26" fill="none">
          <rect x="1" y="1" width="47" height="24" rx="6.500" stroke="#fff" strokeOpacity="0.45" strokeWidth="1.800" />
          <rect x="4.200" y="4.300" width="19" height="17.500" rx="3.500" fill="#fff" />
          <path d="M50.500 9Q53.500 10.500 53.500 13T50.500 17Z" fill="#fff" fillOpacity="0.5" />
        </svg>
      </div>
    </div>
  );
}

function ChatHeader() {
  return (
    <header className="h-[184px] shrink-0 bg-[radial-gradient(ellipse_310px_180px_at_430px_-15px,#2f483e_0%,#30483fe6_30%,#30483f80_60%,#30483f00_100%),linear-gradient(90deg,#605f5c_0%,#5e5e5a_30%,#5b5b58_42%,#555551_52%,#3b4843_66%,#29443a_78%,#2a443a_85%,#454d49_100%)]">
      <StatusBar />
      <div className="flex h-[86px] items-center pr-[47px]">
        <svg className="ml-[26px] mt-[2px] h-10 w-6" viewBox="0 0 24 40" fill="none" stroke="#fafafa" strokeWidth="4.600" strokeLinecap="round" strokeLinejoin="round">
          <path d="M20.500 3.500L3.500 20.500L20.500 36.500" />
        </svg>
        <div className="ml-[71px] flex h-[72px] w-[72px] items-center justify-center rounded-full border border-[#33325c] bg-[#242344]">
          <svg className="h-[26px] w-6" viewBox="0 0 24 26" fill="#a78dff">
            <ellipse cx="12" cy="7" rx="5.200" ry="5.700" />
            <path d="M1 22.500C1 17.500 6 15 12 15S23 17.500 23 22.500Q23 25 21 25H3Q1 25 1 22.500Z" />
          </svg>
        </div>
        <div className="ml-[22px] mt-[2px] flex flex-col">
          <span className="text-[31px] font-semibold leading-9 text-[#fafafa]">Em</span>
          <span className="whitespace-nowrap text-[24px] leading-[33px] tracking-[-0.1px] text-[#b1b2b0]">lần thấy cuối: hôm nay lúc05:44</span>
        </div>
        <svg className="ml-auto mt-[2px] h-9 w-[54px]" viewBox="0 0 54 36" fill="none" stroke="#fff" strokeWidth="2.600" strokeLinejoin="round">
          <rect x="1.500" y="1.500" width="37" height="33" rx="6.500" />
          <path d="M38.500 14.500L49 5.200Q52.500 3.500 52.500 6.500V29.500Q52.500 32.500 49 30.500L38.500 21.500" />
        </svg>
        <svg className="ml-[38px] mt-[2px] h-[42px] w-[42px]" viewBox="0 0 42 42" fill="none" stroke="#fff" strokeWidth="2.600" strokeLinejoin="round">
          <path d="M4.500 2.800C7 0.800 9.500 0.800 11.200 3.200L15.700 9.500C16.800 11 16.800 12.300 15.500 13.500L13.200 15.300C12 16.300 12 17.300 13 18.600C16 22.800 19.500 26.200 23.700 28.800C24.800 29.500 25.700 29.300 26.600 28.300L28.500 26.200C29.700 24.900 31 24.800 32.500 25.800L39 30.300C41.200 31.900 41.300 34 39.500 36.500C36.500 40.500 32 41.500 26.500 39.500C15.500 35.300 6 25.500 2.400 15C0.500 9.500 1 5.500 4.500 2.800Z" />
        </svg>
      </div>
    </header>
  );
}

function Composer() {
  return (
    <footer className="relative flex h-[167px] shrink-0 items-start bg-[linear-gradient(90deg,#625f5a_0%,#625f59_32%,#5b5a54_39%,#494d47_47%,#3a4640_51%,#2a3f36_57%,#203a31_70%,#213a31_80%,#2c3f37_90%,#454c46_100%)] pt-[19px]">
      <svg className="ml-[27px] mt-[11px] h-10 w-10" viewBox="0 0 40 40" stroke="#fff" strokeWidth="3.500" strokeLinecap="round">
        <path d="M20 2V38M2 20H38" />
      </svg>
      <div className="ml-[27px] flex h-16 w-[546px] items-center justify-end rounded-full border border-white/15 bg-white/[0.11] pr-[22px]">
        <svg className="h-[38px] w-[38px]" viewBox="0 0 38 38" fill="none" stroke="#fff" strokeWidth="2.500" strokeLinejoin="round">
          <path d="M20 36.300C7 37.500 1.300 34 1.300 24V14C1.300 5.500 5.500 1.300 14 1.300H24C32.500 1.300 36.500 5.500 36.500 14V18C36.500 24 27 34.500 20 36.300Z" />
          <path d="M20 36C21 33.500 20.500 32 20.500 29C20.500 23.500 23 21.200 28 21.200C31 21.200 33.500 21.500 35.500 20" />
        </svg>
      </div>
      <svg className="ml-[37px] mt-[12px] h-[38px] w-[47px]" viewBox="0 0 47 38" fill="none" stroke="#fff" strokeWidth="2.600" strokeLinejoin="round">
        <path d="M5 6.800H11.500Q13.500 6.800 14.500 5L15.500 3.500Q16.500 1.800 18.500 1.800H28Q30 1.800 31 3.500L32 5Q33 6.800 35 6.800H42Q45.500 6.800 45.500 10.300V32.500Q45.500 36 42 36H5Q1.500 36 1.500 32.500V10.300Q1.500 6.800 5 6.800Z" />
        <circle cx="23.500" cy="21" r="9.500" />
        <circle cx="36.500" cy="14" r="2.600" fill="#fff" stroke="none" />
      </svg>
      <svg className="ml-[38px] mt-[7px] h-[47px] w-8" viewBox="0 0 32 47" fill="none" stroke="#fff" strokeWidth="2.800" strokeLinecap="round">
        <rect x="8" y="1.500" width="16.500" height="30.500" rx="8.250" />
        <path d="M1.800 24.500C2.500 33.500 8.500 38 16 38S29.800 33.500 30.500 24.500M16.200 38V45" />
      </svg>
      <div className="absolute bottom-4 left-[266px] h-[10px] w-[296px] rounded-full bg-linear-to-r from-[#ececec] to-white to-60%" />
    </footer>
  );
}

export default function App() {
  return (
    <div className="flex h-[1792px] w-[828px] flex-col overflow-hidden font-['Inter','Liberation_Sans',sans-serif]">
      <ChatHeader />
      <main className="relative flex-1 overflow-hidden bg-linear-to-b from-[#bebdb8] via-[#bfbab4] to-[#c2b9b2]">
        <Wallpaper />
        <div className="relative flex flex-col px-[33px]">
          {MESSAGES.map((message) => <MessageBubble key={message.id} message={message} />)}
        </div>
        {/* Scroll thumb */}
        <div className="absolute right-[6px] top-[125px] h-[91px] w-[6px] rounded-full bg-white/55" />
        <button className="absolute bottom-[48px] right-[18px] flex h-16 w-16 items-center justify-center rounded-full bg-[#242626] shadow-[0_2px_16px_rgba(0,0,0,0.12)]">
          <svg className="h-4 w-[26px]" viewBox="0 0 26 16" fill="none" stroke="#fff" strokeWidth="3.400" strokeLinecap="round" strokeLinejoin="round">
            <path d="M2.500 2.500L13 13L23.500 2.500" />
          </svg>
        </button>
      </main>
      <Composer />
    </div>
  );
}
